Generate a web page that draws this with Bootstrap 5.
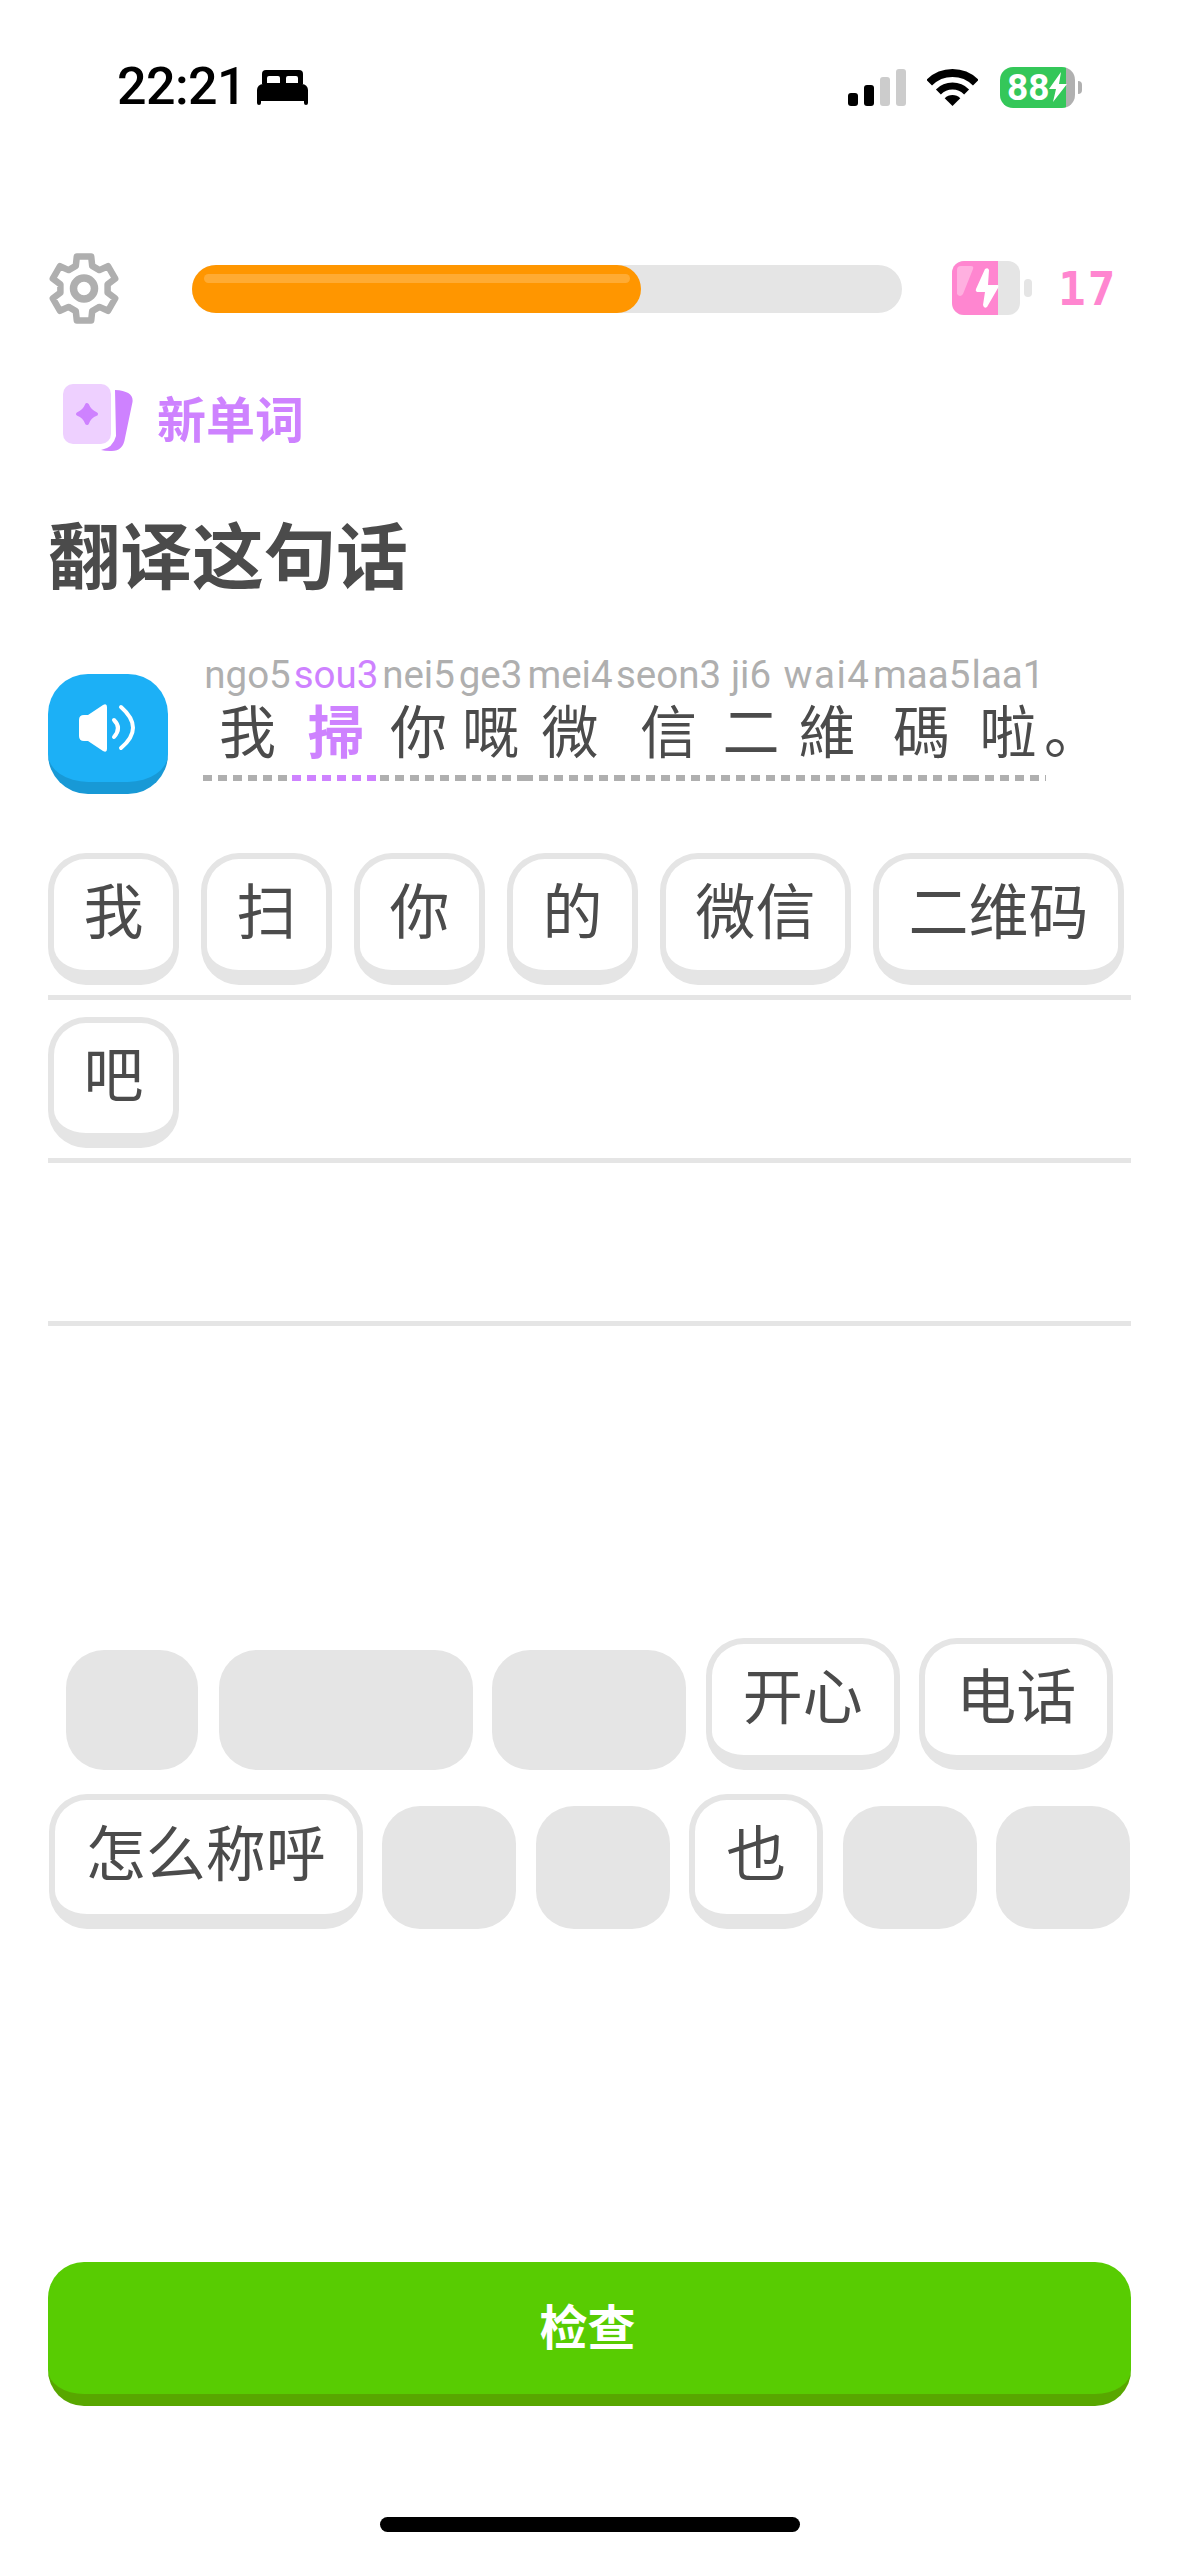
<!DOCTYPE html>
<html lang="zh">

<head>
    <meta charset="UTF-8">
    <meta name="viewport" content="width=device-width, initial-scale=1.0">
    <title>翻译这句话</title>
    <link href="https://cdn.jsdelivr.net/npm/bootstrap@5.3.2/dist/css/bootstrap.min.css" rel="stylesheet">
    <style>
        body { background: #fff; color: #4b4b4b; font-family: "Noto Sans CJK SC", "Liberation Sans", sans-serif; }
        .phone-screen { width: 1179px; height: 2556px; overflow: hidden; }

        /* status bar */
        .status-bar { height: 42px; margin-top: 66px; padding: 0 97px 0 117px; color: #000; }
        .status-time { font: 500 52px/42px Roboto, sans-serif; letter-spacing: -.6px; }
        .bed-icon { margin-left: 11px; }
        .signal-bars { height: 37px; gap: 6px; }
        .signal-bars span { width: 10px; border-radius: 3px; background: #000; }
        .signal-bars .off { background: #ccc; }
        .sb-3 { height: 13px; } .sb-2 { height: 21px; } .sb-1 { height: 29px; } .sb-0 { height: 37px; }
        .wifi-icon { margin: 0 22px 0 21px; }
        .phone-batt { width: 75px; height: 41px; border-radius: 13px; background: linear-gradient(90deg, #34c759 0 66px, #b0b0b0 66px); color: #fff; font: 700 37px/41px Roboto, sans-serif; padding-left: 7px; }
        .batt-nub { width: 4px; height: 13px; margin-left: 3px; background: #b0b0b0; border-radius: 0 4px 4px 0; }

        /* lesson header */
        .lesson-head { margin-top: 145px; height: 71px; padding-left: 49px; }
        .xp-track { width: 710px; height: 48px; margin-left: 73px; margin-right: 50px; background: #e5e5e5; border-radius: 24px; }
        .xp-fill { width: 449px; height: 48px; background: #ff9600; border-radius: 24px; padding: 9px 11px 0 12px; }
        .xp-shine { height: 9px; background: #ffab33; border-radius: 5px; }
        .energy-count { font: 700 46px/1 "DejaVu Sans Mono", monospace; color: #ff86d0; letter-spacing: 2px; margin-left: 26px; }

        .new-word { margin-top: 60px; height: 68px; padding-left: 63px; gap: 24px; color: #ce82ff; font-size: 49px; font-weight: 700; line-height: 66px; }
        .prompt-title { margin: 55px 0 0 48px; font-size: 72px; line-height: 90px; font-weight: 700; color: #4b4b4b; }

        /* sentence */
        .sentence-row { margin-top: 56px; height: 141px; padding-left: 48px; }
        .speak-btn { width: 120px; height: 120px; margin-top: 21px; margin-right: 35px; padding: 0; background: #1cb0f6; border: 0; border-bottom: 12px solid #1899d6; border-radius: 40px; }
        .speak-btn svg { display: block; }
        .hint-col { text-align: center; }
        .hint-col:nth-child(1) { width: 89px; }
        .hint-col:nth-child(2) { width: 88px; }
        .hint-col:nth-child(3) { width: 77px; }
        .hint-col:nth-child(4) { width: 67px; }
        .hint-col:nth-child(5) { width: 92px; }
        .hint-col:nth-child(6) { width: 105px; }
        .hint-col:nth-child(7) { width: 60px; }
        .hint-col:nth-child(8) { width: 92px; }
        .hint-col:nth-child(9) { width: 97px; }
        .hint-col:nth-child(10) { width: 76px; }
        .hint-col:nth-child(8) .hint-rom { letter-spacing: 1.5px; }
        .hint-rom { font: 400 38.5px/44px Roboto, sans-serif; color: #afafaf; white-space: nowrap; }
        .hint-char { font-family: "Noto Sans CJK TC", sans-serif; font-size: 57px; line-height: 68px; color: #4b4b4b; margin-top: -3px; }
        .hint-dash { height: 6px; margin-top: 13px; background: repeating-linear-gradient(90deg, #afafaf 0 9px, transparent 9px 15px); }
        .hint-new .hint-rom, .hint-new .hint-char { color: #ce82ff; }
        .hint-new .hint-char { font-weight: 700; }
        .hint-new .hint-dash { background: repeating-linear-gradient(90deg, #ce82ff 0 9px, transparent 9px 15px); }
        .hint-stop { font-family: "Noto Sans CJK SC", sans-serif; margin-left: -2px; }

        /* answer lines */
        .answer-area { margin: 59px 48px 0; }
        .answer-line { height: 163px; padding-top: 17px; border-bottom: 5px solid #e5e5e5; gap: 22px; }
        .answer-line.first { height: 147px; padding-top: 0; }

        /* tiles */
        .word-tile { height: 132px; padding: 0 29.5px 14px; background: #fff; border: 6px solid #e5e5e5; border-bottom-width: 15px; border-radius: 38px; color: #4b4b4b; font-size: 60px; line-height: 1; white-space: nowrap; }
        .answer-line:not(.first) .word-tile { height: 131px; }
        .word-bank { margin-top: 312px; }
        .bank-row { gap: 19.5px; height: 132px; }
        .bank-row + .bank-row { margin-top: 24px; height: 135px; }
        .bank-row .word-tile { height: 100%; padding: 0 31px 14px; }
        .word-slot { align-self: flex-end; height: 120px; background: #e5e5e5; border-radius: 38px; }
        .bank-row + .bank-row .word-slot { height: 123px; }
        .slot-first { width: 132px; margin-right: 1.5px; } .slot-one { width: 134px; } .slot-two { width: 194px; } .slot-three { width: 254px; }

        /* footer */
        .check-btn { display: block; width: 1083px; height: 144px; margin: 333px 48px 0; padding: 0 4px 8px 0; background: #58cc02; border: 0; border-bottom: 12px solid #58a700; border-radius: 36px; color: #fff; font-size: 48px; font-weight: 700; }
        .home-bar { width: 420px; height: 15px; margin: 111px auto 0; background: #000; border-radius: 8px; }
    </style>
</head>

<body>
    <div class="phone-screen">
        <div class="status-bar d-flex align-items-center justify-content-between">
            <div class="d-flex align-items-center">
                <span class="status-time">22:21</span>
                <svg class="bed-icon" width="51" height="35" viewBox="0 0 51 35">
                    <path d="M5 14V4a4 4 0 0 1 4-4h33a4 4 0 0 1 4 4v10z" fill="#000" />
                    <path d="M10 13V8a2 2 0 0 1 2-2h9a2 2 0 0 1 2 2v5zM29 13V8a2 2 0 0 1 2-2h8a2 2 0 0 1 2 2v5z" fill="#fff" />
                    <path d="M6 14h39a6 6 0 0 1 6 6v13a2 2 0 0 1-4 0v-2H4v2a2 2 0 0 1-4 0V20a6 6 0 0 1 6-6z" fill="#000" />
                </svg>
            </div>
            <div class="d-flex align-items-center">
                <div class="signal-bars d-flex align-items-end">
                    <span class="sb-3"></span><span class="sb-2"></span><span class="sb-1 off"></span><span class="sb-0 off"></span>
                </div>
                <svg class="wifi-icon" width="51" height="37" viewBox="0 0 51 37">
                    <path d="M2.2 13.7A33 33 0 0 1 48.8 13.7" fill="none" stroke="#000" stroke-width="8" />
                    <path d="M11.4 22.9A20 20 0 0 1 39.6 22.9" fill="none" stroke="#000" stroke-width="7" />
                    <path d="M25.5 37L17.7 29.2A11 11 0 0 1 33.3 29.2z" fill="#000" />
                </svg>
                <div class="phone-batt d-flex align-items-center">
                    <span>88</span>
                    <svg width="18" height="30" viewBox="0 0 18 30"><path d="M12 0L0 17h7l-3 13L18 12h-8z" fill="#fff" /></svg>
                </div>
                <div class="batt-nub"></div>
            </div>
        </div>

        <div class="lesson-head d-flex align-items-center">
            <svg width="70" height="71" viewBox="0 0 70 71" fill="none" stroke="#afafaf">
                <polygon stroke-width="6.5" stroke-linejoin="round" points="26.8,12.9 27.8,3.6 42.2,3.6 43.2,12.9 50.4,17.1 59,13.2 66.2,25.7 58.6,31.3 58.6,39.7 66.2,45.3 59,57.8 50.4,53.9 43.2,58.1 42.2,67.4 27.8,67.4 26.8,58.1 19.6,53.9 11,57.8 3.8,45.3 11.4,39.7 11.4,31.3 3.8,25.7 11,13.2 19.6,17.1" />
                <circle cx="35" cy="35.5" r="10.5" stroke-width="7.5" />
            </svg>
            <div class="xp-track">
                <div class="xp-fill"><div class="xp-shine"></div></div>
            </div>
            <svg width="80" height="55" viewBox="0 0 80 55">
                <rect width="68" height="54" rx="12" fill="#e5e5e5" />
                <path d="M12 0H46V54H12A12 12 0 0 1 0 42V12A12 12 0 0 1 12 0z" fill="#ff86d0" />
                <path d="M9 5H19Q22 5 21 8L11 33Q8 37 5 33V9Q5 5 9 5z" fill="#ffb0e0" />
                <path d="M33 8Q36 6 37 9L36 24H46Q47 25 46 27L35 46Q32 48 31 44L33 31H25Q23 30 24 28z" fill="#fff" />
                <rect x="72" y="18" width="8" height="18" rx="4" fill="#e5e5e5" />
            </svg>
            <span class="energy-count">17</span>
        </div>

        <div class="new-word d-flex">
            <svg width="70" height="68" viewBox="0 0 70 68">
                <path d="M52 6Q71 7 69.5 18L62 54Q60 68 47 67Q42 67 38 66Q50 64 53 52z" fill="#ce82ff" />
                <rect width="48" height="60" rx="10" fill="#eed0ff" />
                <path d="M24 21Q26.5 27.5 33 30Q26.5 32.5 24 39Q21.5 32.5 15 30Q21.5 27.5 24 21z" fill="#ce82ff" stroke="#ce82ff" stroke-width="4" stroke-linejoin="round" />
            </svg>
            <span>新单词</span>
        </div>

        <h1 class="prompt-title">翻译这句话</h1>

        <div class="sentence-row d-flex align-items-start">
            <button class="btn speak-btn" type="button" aria-label="播放">
                <svg width="120" height="108" viewBox="0 0 120 108">
                    <path d="M31 46Q31 41 36 41H40L55 31Q59 29 59 33V75Q59 79 55 77L40 67H36Q31 67 31 62z" fill="#fff" />
                    <path d="M66 46Q74 54 66 63M73 33Q97 54 73 74" fill="none" stroke="#fff" stroke-width="4" stroke-linecap="round" />
                </svg>
            </button>
            <div class="d-flex">
                <div class="hint-col"><div class="hint-rom">ngo5</div><div class="hint-char">我</div><div class="hint-dash"></div></div>
                <div class="hint-col hint-new"><div class="hint-rom">sou3</div><div class="hint-char">掃</div><div class="hint-dash"></div></div>
                <div class="hint-col"><div class="hint-rom">nei5</div><div class="hint-char">你</div><div class="hint-dash"></div></div>
                <div class="hint-col"><div class="hint-rom">ge3</div><div class="hint-char">嘅</div><div class="hint-dash"></div></div>
                <div class="hint-col"><div class="hint-rom">mei4</div><div class="hint-char">微</div><div class="hint-dash"></div></div>
                <div class="hint-col"><div class="hint-rom">seon3</div><div class="hint-char">信</div><div class="hint-dash"></div></div>
                <div class="hint-col"><div class="hint-rom">ji6</div><div class="hint-char">二</div><div class="hint-dash"></div></div>
                <div class="hint-col"><div class="hint-rom">wai4</div><div class="hint-char">維</div><div class="hint-dash"></div></div>
                <div class="hint-col"><div class="hint-rom">maa5</div><div class="hint-char">碼</div><div class="hint-dash"></div></div>
                <div class="hint-col"><div class="hint-rom">laa1</div><div class="hint-char">啦</div><div class="hint-dash"></div></div>
                <div class="hint-col"><div class="hint-rom">&nbsp;</div><div class="hint-char hint-stop">。</div></div>
            </div>
        </div>

        <div class="answer-area">
            <div class="answer-line first d-flex">
                <button class="btn word-tile" type="button">我</button>
                <button class="btn word-tile" type="button">扫</button>
                <button class="btn word-tile" type="button">你</button>
                <button class="btn word-tile" type="button">的</button>
                <button class="btn word-tile" type="button">微信</button>
                <button class="btn word-tile" type="button">二维码</button>
            </div>
            <div class="answer-line d-flex">
                <button class="btn word-tile" type="button">吧</button>
            </div>
            <div class="answer-line d-flex"></div>
        </div>

        <div class="word-bank">
            <div class="bank-row d-flex justify-content-center">
                <div class="word-slot slot-first"></div>
                <div class="word-slot slot-three"></div>
                <div class="word-slot slot-two"></div>
                <button class="btn word-tile" type="button">开心</button>
                <button class="btn word-tile" type="button">电话</button>
            </div>
            <div class="bank-row d-flex justify-content-center">
                <button class="btn word-tile" type="button">怎么称呼</button>
                <div class="word-slot slot-one"></div>
                <div class="word-slot slot-one"></div>
                <button class="btn word-tile" type="button">也</button>
                <div class="word-slot slot-one"></div>
                <div class="word-slot slot-one"></div>
            </div>
        </div>

        <button class="btn check-btn" type="button">检查</button>
        <div class="home-bar"></div>
    </div>

    <script src="https://cdn.jsdelivr.net/npm/bootstrap@5.3.2/dist/js/bootstrap.bundle.min.js"></script>
</body>

</html>
